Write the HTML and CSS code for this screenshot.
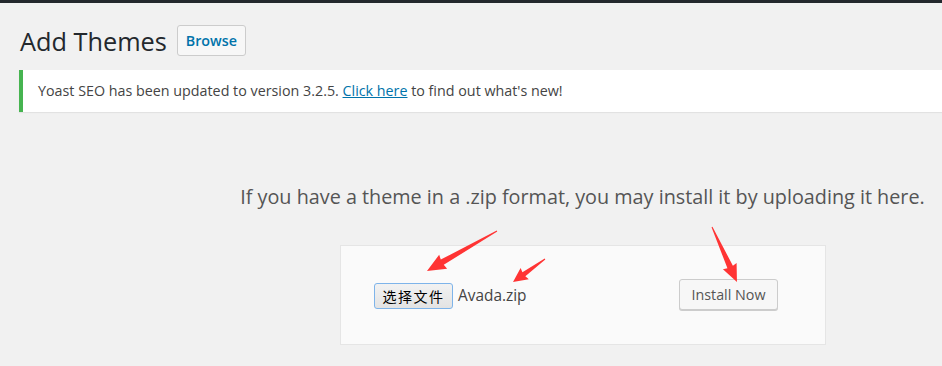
FILE: index.html
```html
<!DOCTYPE html>
<html lang="en">
<head>
  <meta charset="UTF-8">
  <title>Add Themes</title>
  <link rel="stylesheet" href="styles.css">
</head>
<body>
  <div class="adminbar"></div>

  <div class="wrap">
    <div class="page-head">
      <h1 class="page-title">Add Themes</h1>
      <a class="button browse" href="#">Browse</a>
    </div>

    <div class="notice">
      <p>Yoast SEO has been updated to version 3.2.5. <a href="#">Click here</a> to find out what's new!</p>
    </div>

    <p class="install-help">If you have a theme in a .zip format, you may install it by uploading it here.</p>

    <form class="upload-form">
      <div class="file-field">
        <span class="file-button">选择文件</span>
        <span class="file-name">Avada.zip</span>
      </div>
      <span class="button install">Install Now</span>
    </form>
  </div>

  <!-- red annotation arrows drawn over the screenshot -->
  <svg class="arrows" width="942" height="366" viewBox="0 0 942 366">
    <g fill="#ff3434">
      <polygon transform="translate(497 231) rotate(150.3)" points="0,-0.5 63,-3 62,-8 80.6,0 62,8 63,3 0,0.5"/>
      <polygon transform="translate(545 259) rotate(144.3)" points="0,-0.5 26,-2.5 25,-7 39.4,0 25,7 26,2.5 0,0.5"/>
      <polygon transform="translate(712 227) rotate(65.6)" points="0,-0.5 44,-3 43,-7.5 60.4,0 43,7.5 44,3 0,0.5"/>
    </g>
  </svg>
</body>
</html>
```

FILE: styles.css
```css
body {
  margin: 0;
  background: #f1f1f1;
  color: #444;
  font-family: "Open Sans", "Liberation Sans", sans-serif;
  font-size: 14.3px;
  overflow: hidden;
  position: relative;
  width: 942px;
  height: 366px;
}

.adminbar {
  height: 3px;
  background: #23282d;
}

.wrap {
  margin-left: 19px;
  width: 1127px;
}

.page-head {
  display: flex;
  align-items: center;
  gap: 10px;
  padding: 22px 0 0 1px;
  height: 33px;
}

.page-title {
  margin: 0;
  font-size: 25.3px;
  font-weight: 400;
  color: #23282d;
  line-height: 33px;
}

.button {
  display: inline-flex;
  align-items: center;
  justify-content: center;
  box-sizing: border-box;
  background: #f7f7f7;
  border: 1px solid #ccc;
  border-radius: 3px;
  box-shadow: 0 1px 0 #ccc;
  color: #555;
  text-decoration: none;
}

.browse {
  width: 69px;
  height: 31px;
  margin-top: -2px;
  font-size: 14.3px;
  font-weight: 600;
  color: #0073aa;
  box-shadow: none;
}

.notice {
  margin-top: 12px;
  height: 42px;
  box-sizing: border-box;
  background: #fff;
  border-left: 4px solid #46b450;
  box-shadow: 0 1px 1px rgba(0, 0, 0, 0.06);
  padding: 0 15px;
}

.notice p {
  margin: 0;
  line-height: 42px;
  white-space: nowrap;
}

.notice a {
  color: #0073aa;
  text-decoration: underline;
}

.install-help {
  margin: 73px 0 0;
  text-align: center;
  font-size: 19.8px;
  line-height: 24px;
  color: #555;
}

.upload-form {
  width: 486px;
  height: 100px;
  box-sizing: border-box;
  margin: 36px 0 0 321px;
  background: #fafafa;
  border: 1px solid #e5e5e5;
  display: flex;
  align-items: center;
  justify-content: space-between;
  padding: 0 47px 2px 33px;
}

.file-field {
  display: flex;
  align-items: center;
  gap: 5px;
  margin-top: 3px;
}

.file-button {
  box-sizing: border-box;
  width: 79px;
  height: 26px;
  display: inline-flex;
  align-items: center;
  justify-content: center;
  border: 1px solid #7eb4ea;
  border-radius: 3px;
  background: linear-gradient(#f2f2f2, #e3e3e3);
  color: #000;
  font-family: "Noto Sans CJK SC", sans-serif;
  font-size: 14px;
  letter-spacing: 1.5px;
}

.file-name {
  font-size: 15.4px;
  color: #444;
}

.install {
  width: 99px;
  height: 31px;
  font-size: 14.3px;
}

.arrows {
  position: absolute;
  left: 0;
  top: 0;
  pointer-events: none;
}
```
